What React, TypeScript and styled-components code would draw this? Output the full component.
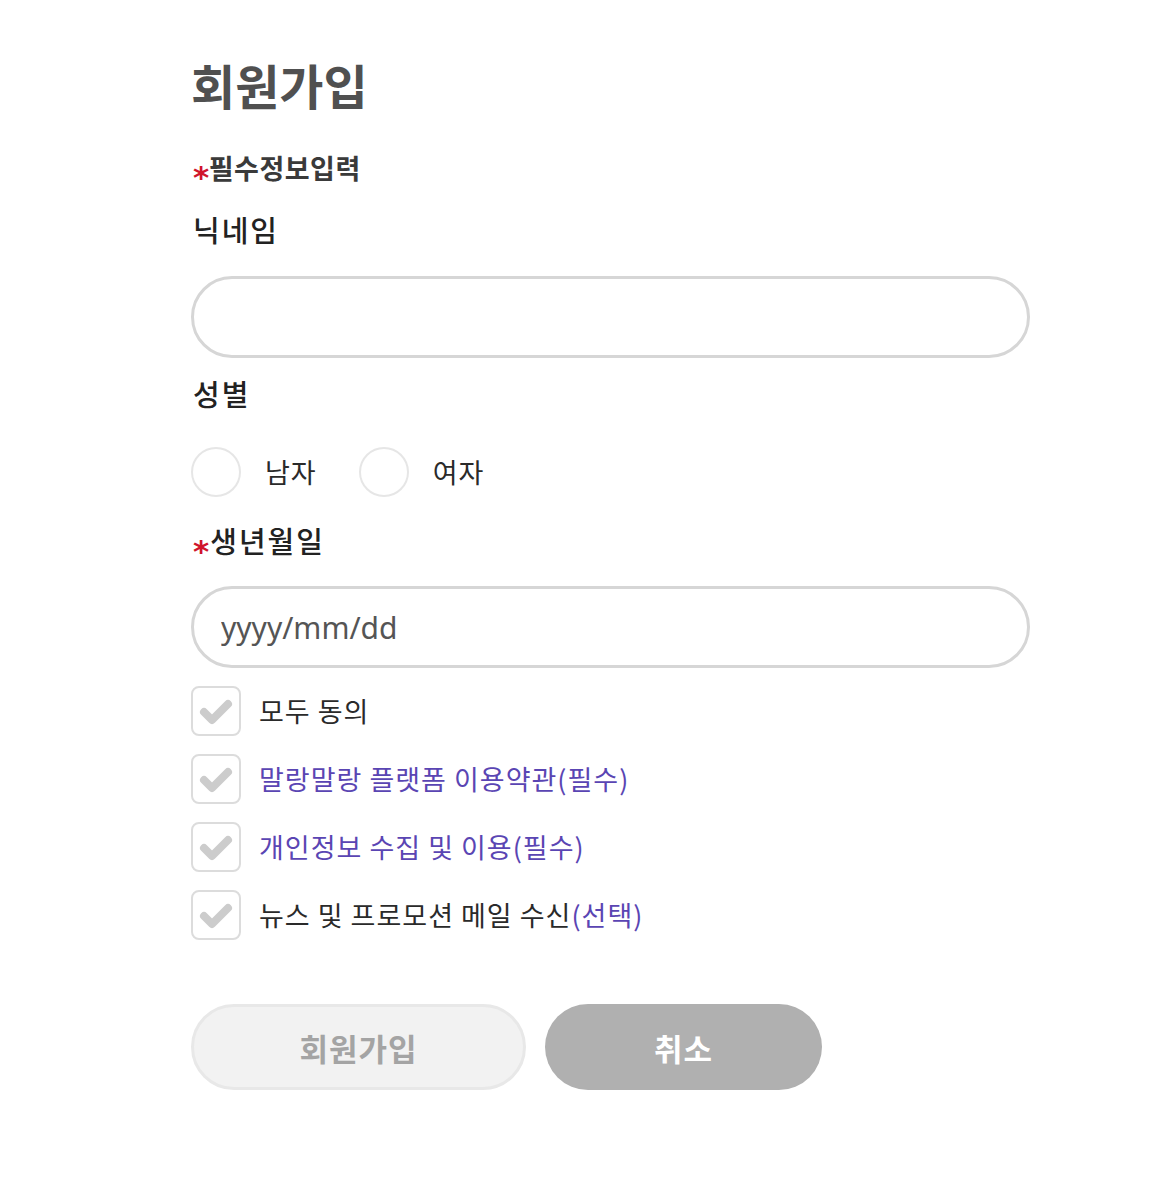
import * as React from "react";
import styled, { createGlobalStyle } from "styled-components";

const GlobalStyle = createGlobalStyle`
  body {
    margin: 0;
    background: #ffffff;
    font-family: "Noto Sans CJK KR", "Noto Sans", sans-serif;
  }
`;

const Page = styled.div`
  padding: 56px 0 100px 191px;
`;

const Form = styled.form`
  width: 839px;
  display: flex;
  flex-direction: column;
`;

const Title = styled.h1`
  margin: 0;
  font-size: 48px;
  line-height: 56px;
  font-weight: 700;
  color: #505050;
  letter-spacing: 0;
`;

const Required = styled.span`
  display: inline-block;
  color: #d0142c;
  font-family: "DejaVu Sans", sans-serif;
  font-size: 31px;
  line-height: 20px;
  font-weight: 700;
  position: relative;
  top: 9px;
  margin-right: -1px;
`;

const Notice = styled.p`
  margin: 40px 0 0 2px;
  font-size: 27px;
  line-height: 32px;
  font-weight: 700;
  color: #3a3a3a;
  letter-spacing: 0.5px;
`;

const Label = styled.label<{ $top: number }>`
  display: block;
  margin: ${p => p.$top}px 0 0 2px;
  font-size: 29px;
  line-height: 36px;
  font-weight: 500;
  color: #222;
  letter-spacing: 2px;
`;

const TextInput = styled.input<{ $top: number }>`
  box-sizing: border-box;
  width: 839px;
  height: 82px;
  margin-top: ${p => p.$top}px;
  border: 3px solid #d6d6d6;
  border-radius: 41px;
  padding: 0 27px;
  font-family: "Noto Sans", "Noto Sans CJK KR", sans-serif;
  font-size: 30px;
  color: #333;
  outline: none;
  background: #fff;
  &::placeholder {
    color: #555;
  }
`;

const RadioGroup = styled.div`
  display: flex;
  align-items: center;
  margin-top: 36px;
  height: 50px;
`;

const RadioOption = styled.label`
  display: flex;
  align-items: center;
  margin-right: 42px;
  cursor: pointer;
`;

const RadioCircle = styled.span`
  box-sizing: border-box;
  width: 50px;
  height: 50px;
  border: 2px solid #e6e6e6;
  border-radius: 50%;
  margin-right: 24px;
`;

const OptionText = styled.span<{ $color?: string }>`
  font-size: 27px;
  line-height: 34px;
  color: ${p => p.$color || "#2a2a2a"};
  letter-spacing: 1px;
`;

const Agreements = styled.div`
  display: flex;
  flex-direction: column;
  gap: 18px;
  margin-top: 18px;
`;

const AgreeRow = styled.label`
  display: flex;
  align-items: center;
  height: 50px;
  cursor: pointer;
`;

const CheckBox = styled.span`
  box-sizing: border-box;
  width: 50px;
  height: 50px;
  border: 2px solid #dcdcdc;
  border-radius: 8px;
  margin-right: 18px;
  display: flex;
  align-items: center;
  justify-content: center;
`;

const Buttons = styled.div`
  display: flex;
  gap: 19px;
  margin-top: 64px;
`;

const Button = styled.button<{ $primary?: boolean; $width: number }>`
  box-sizing: border-box;
  width: ${p => p.$width}px;
  height: 86px;
  border-radius: 43px;
  border: ${p => (p.$primary ? "none" : "3px solid #e8e8e8")};
  background: ${p => (p.$primary ? "#b0b0b0" : "#f2f2f2")};
  color: ${p => (p.$primary ? "#ffffff" : "#a4a4a4")};
  font-family: "Noto Sans CJK KR", sans-serif;
  font-size: 31px;
  font-weight: 700;
  letter-spacing: 1px;
  cursor: pointer;
`;

const purple = "#5a45b3";

const Check = () => (
  <svg width="34" height="32" viewBox="0 0 34 32">
    <polyline
      points="5,17 13,25 29,9"
      fill="none"
      stroke="#cccccc"
      strokeWidth="8"
      strokeLinecap="round"
      strokeLinejoin="round"
    />
  </svg>
);

const agreements: { text: string; color?: string; extra?: string }[] = [
  { text: "모두 동의" },
  { text: "말랑말랑 플랫폼 이용약관(필수)", color: purple },
  { text: "개인정보 수집 및 이용(필수)", color: purple },
  { text: "뉴스 및 프로모션 메일 수신", extra: "(선택)" },
];

const App = () => {
  return (
    <Page>
      <GlobalStyle />
      <Form onSubmit={e => e.preventDefault()}>
        <Title>회원가입</Title>
        <Notice>
          <Required>*</Required>필수정보입력
        </Notice>
        <Label $top={27}>닉네임</Label>
        <TextInput $top={29} type="text" />
        <Label $top={17}>성별</Label>
        <RadioGroup>
          <RadioOption>
            <RadioCircle />
            <OptionText>남자</OptionText>
          </RadioOption>
          <RadioOption>
            <RadioCircle />
            <OptionText>여자</OptionText>
          </RadioOption>
        </RadioGroup>
        <Label $top={25}>
          <Required>*</Required>생년월일
        </Label>
        <TextInput $top={28} type="text" placeholder="yyyy/mm/dd" />
        <Agreements>
          {agreements.map(a => (
            <AgreeRow key={a.text}>
              <CheckBox>
                <Check />
              </CheckBox>
              <OptionText $color={a.color}>
                {a.text}
                {a.extra && <OptionText $color={purple}>{a.extra}</OptionText>}
              </OptionText>
            </AgreeRow>
          ))}
        </Agreements>
        <Buttons>
          <Button $width={335} type="submit">회원가입</Button>
          <Button $width={277} $primary type="button">취소</Button>
        </Buttons>
      </Form>
    </Page>
  );
};

export default App;
